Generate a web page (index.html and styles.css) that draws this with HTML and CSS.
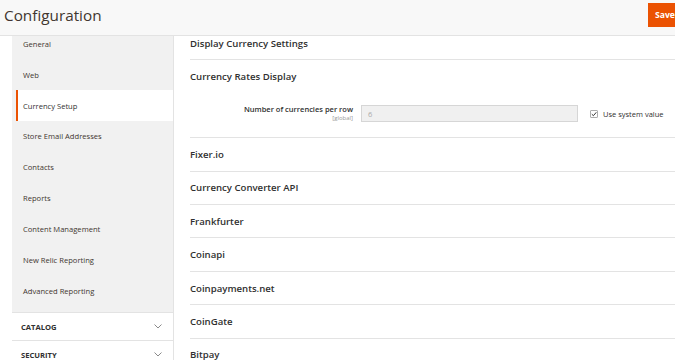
FILE: index.html
```
<!DOCTYPE html>
<html>
<head>
<meta charset="utf-8">
<link rel="stylesheet" href="styles.css">
</head>
<body>
<header class="page-header">
  <h1 class="page-title">Configuration</h1>
  <button class="save-btn">Save</button>
</header>
<div class="page-body">
  <aside class="sidebar">
    <div class="nav-panel">
      <ul class="nav-list">
        <li class="nav-item">General</li>
        <li class="nav-item">Web</li>
        <li class="nav-item active">Currency Setup</li>
        <li class="nav-item">Store Email Addresses</li>
        <li class="nav-item">Contacts</li>
        <li class="nav-item">Reports</li>
        <li class="nav-item">Content Management</li>
        <li class="nav-item">New Relic Reporting</li>
        <li class="nav-item">Advanced Reporting</li>
      </ul>
    </div>
    <div class="nav-group"><span>CATALOG</span><svg class="chev" viewBox="0 0 8 5" width="8" height="5"><path d="M0.5 0.5 L4 4 L7.5 0.5" fill="none" stroke="#8a8a8a" stroke-width="1"/></svg></div>
    <div class="nav-group"><span>SECURITY</span><svg class="chev" viewBox="0 0 8 5" width="8" height="5"><path d="M0.5 0.5 L4 4 L7.5 0.5" fill="none" stroke="#8a8a8a" stroke-width="1"/></svg></div>
  </aside>
  <main class="content">
    <div class="sections">
      <section class="section"><div class="section-title">Display Currency Settings</div></section>
      <section class="section">
        <div class="section-title">Currency Rates Display</div>
        <div class="field-row">
          <div class="field-label">
            <span class="label-text">Number of currencies per row</span>
            <span class="scope">[global]</span>
          </div>
          <div class="field-input">6</div>
          <label class="use-default"><span class="checkbox"><svg viewBox="0 0 8 8" width="8" height="8"><path d="M1.8 4.2 L3.4 5.7 L6.3 2.3" fill="none" stroke="#333" stroke-width="1"/></svg></span>Use system value</label>
        </div>
      </section>
      <section class="section"><div class="section-title">Fixer.io</div></section>
      <section class="section"><div class="section-title">Currency Converter API</div></section>
      <section class="section"><div class="section-title">Frankfurter</div></section>
      <section class="section"><div class="section-title">Coinapi</div></section>
      <section class="section"><div class="section-title">Coinpayments.net</div></section>
      <section class="section"><div class="section-title">CoinGate</div></section>
      <section class="section"><div class="section-title">Bitpay</div></section>
    </div>
  </main>
</div>
</body>
</html>
```
FILE: styles.css
```
* { box-sizing: border-box; }
html, body { margin: 0; padding: 0; background: #fff; overflow: hidden; }
body {
  font-family: "Open Sans", "Liberation Sans", sans-serif;
  color: #303030;
  width: 675px;
  height: 360px;
}
.page-header {
  position: relative;
  z-index: 2;
  height: 36px;
  background: #f8f8f8;
  border-bottom: 1px solid #e3e3e3;
  display: flex;
  align-items: flex-start;
  justify-content: space-between;
}
.page-title {
  margin: 0;
  padding: 4px 0 0 4px;
  font-size: 15.3px;
  font-weight: 400;
  line-height: 22px;
  color: #41362f;
}
.save-btn {
  margin-top: 3px;
  height: 24px;
  width: 27px;
  background: #eb5202;
  border: 0;
  color: #fff;
  font-family: "Open Sans", "Liberation Sans", sans-serif;
  font-weight: 700;
  font-size: 8.6px;
  text-align: left;
  padding: 0 0 0 7px;
  white-space: nowrap;
  overflow: hidden;
}
.page-body {
  display: flex;
  height: 324px;
  overflow: hidden;
}
.sidebar {
  width: 162px;
  margin-left: 12px;
  flex: none;
  border-right: 1px solid #e3e3e3;
}
.nav-panel {
  background: #f1f1f1;
  height: 277px;
  overflow: hidden;
}
.nav-list {
  list-style: none;
  margin: -7.5px 0 0 4px;
  padding: 0;
}
.nav-item {
  height: 30.85px;
  display: flex;
  align-items: center;
  padding-left: 5px;
  border-left: 2px solid transparent;
  font-size: 7.6px;
  color: #41362f;
}
.nav-item.active {
  background: #fff;
  border-left-color: #eb5202;
  color: #303030;
}
.nav-group {
  height: 29px;
  border-bottom: 1px solid #e3e3e3;
  border-top: 1px solid #e3e3e3;
  margin-top: -1px;
  display: flex;
  align-items: center;
  justify-content: space-between;
  padding: 0 11px 0 9px;
  font-size: 7.6px;
  font-weight: 700;
  color: #303030;
}
.nav-group:first-of-type { margin-top: 0; }
.content {
  flex: 1;
  padding-left: 16px;
  overflow: hidden;
}
.sections { margin-top: -9px; }
.section { border-bottom: 1px solid #e3e3e3; }
.section-title {
  height: 32.4px;
  display: flex;
  align-items: center;
  font-size: 9.6px;
  font-weight: 600;
  color: #303030;
}
.field-row {
  display: flex;
  align-items: center;
  height: 44.5px;
  padding-bottom: 3px;
}
.field-label {
  width: 163px;
  display: flex;
  flex-direction: column;
  align-items: flex-end;
  line-height: 1;
}
.label-text { font-size: 7.5px; font-weight: 600; color: #303030; }
.scope { font-size: 6px; color: #999; margin-top: 1.5px; }
.field-input {
  margin-left: 8px;
  width: 217px;
  height: 17px;
  background: #f0f0f0;
  border: 1px solid #d6d6d6;
  font-size: 7.5px;
  color: #aaa;
  padding-left: 6px;
  display: flex;
  align-items: center;
}
.use-default {
  margin-left: 12px;
  display: flex;
  align-items: center;
  font-size: 7.5px;
  color: #303030;
}
.checkbox {
  width: 8px;
  height: 8px;
  border: 1px solid #adadad;
  border-radius: 1px;
  margin-right: 5px;
  position: relative;
}
.checkbox svg { position: absolute; left: -1px; top: -1px; }
```
